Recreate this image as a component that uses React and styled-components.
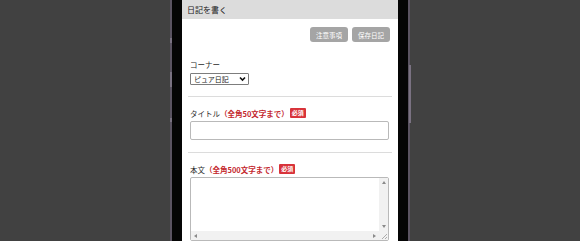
import React from "react";
import styled, { createGlobalStyle } from "styled-components";

const Global = createGlobalStyle`
  html, body { margin: 0; padding: 0; background: #414141; }
  body { font-family: "Noto Sans CJK JP", "Noto Sans", sans-serif; overflow: hidden; }
`;

const Stage = styled.div`
  height: 241px;
  display: flex;
  justify-content: center;
`;

const Phone = styled.div`
  position: relative;
  width: 216px;
  height: 241px;
  padding: 0 10px;
  background: #050505;
  border-left: 2px solid #5b5462;
  border-right: 2px solid #5b5462;
`;

const SideKey = styled.div`
  position: absolute;
  width: 2px;
  background: #7a7282;
  top: ${(p) => p.$top}px;
  height: ${(p) => p.$h}px;
  ${(p) => (p.$side === "left" ? "left: -2px;" : "right: -3px;")}
`;

const Screen = styled.div`
  height: 100%;
  background: #fff;
  overflow: hidden;
`;

const TopBar = styled.div`
  height: 19px;
  background: #dcdcdc;
  display: flex;
  align-items: center;
  padding: 0 5px;
  font-size: 8px;
  color: #222;
`;

const Toolbar = styled.div`
  display: flex;
  justify-content: flex-end;
  gap: 4px;
  padding: 8px 8px 0;
`;

const GrayButton = styled.button`
  width: 38px;
  height: 15px;
  border: 0;
  border-radius: 3px;
  background: #a5a5a5;
  color: #fff;
  font-family: inherit;
  font-size: 6.5px;
  padding: 0;
  display: flex;
  align-items: center;
  justify-content: center;
`;

const Body = styled.div`
  padding: 0 6px;
`;

const Field = styled.div`
  display: flex;
  flex-direction: column;
  align-items: flex-start;
  gap: ${(p) => p.$gap}px;
  padding: ${(p) => p.$top}px 3px ${(p) => p.$bottom}px 2px;
  border-bottom: ${(p) => (p.$last ? "0" : "1px solid #dcdcdc")};
`;

const Label = styled.div`
  display: flex;
  align-items: center;
  height: 10px;
  font-size: 7.5px;
  color: #2a2a2a;
  white-space: nowrap;
`;

const Note = styled.span`
  color: #c3262c;
  font-weight: 700;
`;

const Badge = styled.span`
  margin-left: 1px;
  background: #d8333a;
  color: #fff;
  font-size: 6px;
  font-weight: 700;
  line-height: 10px;
  padding: 0 2px;
  border-radius: 1px;
`;

const SelectWrap = styled.div`
  position: relative;
  width: 59px;
  height: 12px;
`;

const Select = styled.select`
  appearance: none;
  display: block;
  width: 100%;
  height: 100%;
  box-sizing: border-box;
  border: 1px solid #7d7d7d;
  border-radius: 1px;
  background: #fff;
  font-family: inherit;
  font-size: 7px;
  color: #222;
  padding: 0 0 0 3px;
  margin: 0;
  outline: none;
`;

const ChevronSlot = styled.span`
  position: absolute;
  right: 3px;
  top: 3px;
  width: 7px;
  height: 6px;
  display: flex;
  pointer-events: none;
`;

const TextInput = styled.input`
  box-sizing: border-box;
  width: 100%;
  height: 19px;
  margin: 0;
  border: 1px solid #b9b9b9;
  border-radius: 2px;
  background: #fff;
  outline: none;
`;

const AreaBox = styled.div`
  position: relative;
  width: 100%;
  height: 64px;
`;

const TextArea = styled.textarea`
  display: block;
  box-sizing: border-box;
  width: 100%;
  height: 100%;
  margin: 0;
  padding: 2px 11px 11px 2px;
  border: 1px solid #b9b9b9;
  border-radius: 2px;
  background: #fff;
  resize: none;
  outline: none;
`;

const VBar = styled.div`
  position: absolute;
  top: 1px;
  right: 1px;
  bottom: 10px;
  width: 9px;
  background: #f1f1f1;
  display: flex;
  flex-direction: column;
  justify-content: space-between;
  align-items: center;
  padding: 3px 0;
  box-sizing: border-box;
  pointer-events: none;
`;

const HBar = styled.div`
  position: absolute;
  left: 1px;
  right: 10px;
  bottom: 1px;
  height: 9px;
  background: #f1f1f1;
  display: flex;
  justify-content: space-between;
  align-items: center;
  padding: 0 3px;
  box-sizing: border-box;
  pointer-events: none;
`;

const Corner = styled.div`
  position: absolute;
  right: 1px;
  bottom: 1px;
  width: 9px;
  height: 9px;
  background: #f1f1f1;
  display: flex;
  pointer-events: none;
`;

const Arrow = ({ dir }) => {
  const pts = {
    up: "0,3 2,0 4,3",
    down: "0,0 4,0 2,3",
    left: "3,0 3,4 0,2",
    right: "0,0 3,2 0,4",
  }[dir];
  const vertical = dir === "up" || dir === "down";
  return (
    <svg width={vertical ? 4 : 3} height={vertical ? 3 : 4} viewBox={vertical ? "0 0 4 3" : "0 0 3 4"}>
      <polygon points={pts} fill="#8a8a8a" />
    </svg>
  );
};

export default function App() {
  return (
    <>
      <Global />
      <Stage>
        <Phone>
          <SideKey $side="left" $top={38} $h={5} />
          <SideKey $side="left" $top={72} $h={15} />
          <SideKey $side="left" $top={118} $h={4} />
          <SideKey $side="right" $top={65} $h={58} />
          <Screen>
            <TopBar>日記を書く</TopBar>
            <Toolbar>
              <GrayButton>注意事項</GrayButton>
              <GrayButton>保存日記</GrayButton>
            </Toolbar>
            <Body>
              <Field $top={17} $bottom={11} $gap={4}>
                <Label>コーナー</Label>
                <SelectWrap>
                  <Select defaultValue="pure">
                    <option value="pure">ピュア日記</option>
                  </Select>
                  <ChevronSlot>
                    <svg width="7" height="6" viewBox="0 0 7 6">
                      <path d="M1 1.5 L3.5 4 L6 1.5" fill="none" stroke="#111" strokeWidth="1.6" />
                    </svg>
                  </ChevronSlot>
                </SelectWrap>
              </Field>
              <Field $top={11} $bottom={12} $gap={3}>
                <Label>
                  タイトル<Note>（全角50文字まで）</Note>
                  <Badge>必須</Badge>
                </Label>
                <TextInput type="text" />
              </Field>
              <Field $top={11} $bottom={0} $gap={3} $last>
                <Label>
                  本文<Note>（全角500文字まで）</Note>
                  <Badge>必須</Badge>
                </Label>
                <AreaBox>
                  <TextArea />
                  <VBar>
                    <Arrow dir="up" />
                    <Arrow dir="down" />
                  </VBar>
                  <HBar>
                    <Arrow dir="left" />
                    <Arrow dir="right" />
                  </HBar>
                  <Corner>
                    <svg width="9" height="9" viewBox="0 0 9 9">
                      <path d="M8 3 L3 8 M8 6 L6 8" stroke="#9a9a9a" strokeWidth="0.8" />
                    </svg>
                  </Corner>
                </AreaBox>
              </Field>
            </Body>
          </Screen>
        </Phone>
      </Stage>
    </>
  );
}
